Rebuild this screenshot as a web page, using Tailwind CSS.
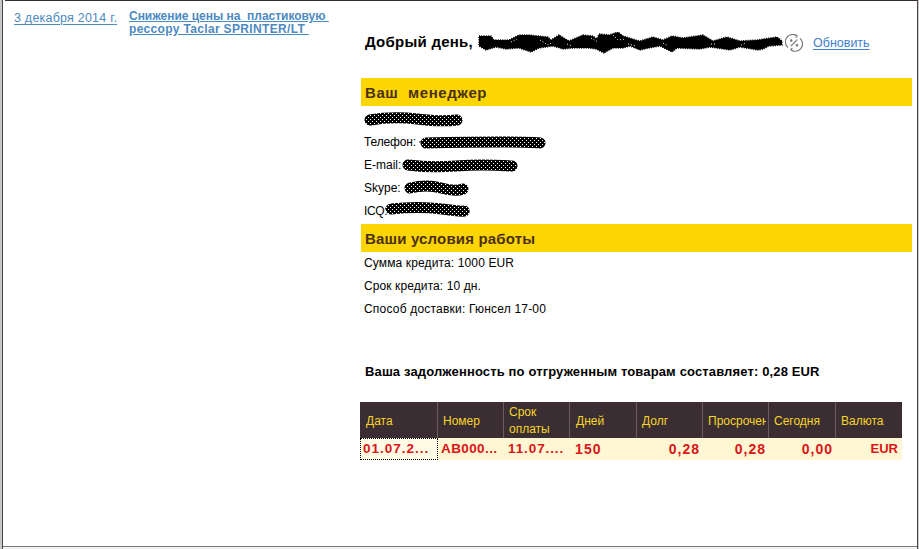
<!DOCTYPE html>
<html lang="ru"><head><meta charset="utf-8"><title>Условия работы</title>
<script src="https://cdn.jsdelivr.net/npm/@tailwindcss/browser@4"></script></head>
<body class="w-[919px] h-[549px] overflow-hidden bg-[#c9c7c7] font-['Liberation_Sans',sans-serif] text-black">
<div class="h-[549px] ml-[2px] w-[916px] border-l border-r border-[#4a4446] bg-white flex flex-col whitespace-pre">
<div class="ml-[2px] h-px bg-[#332b2d]"></div>
<div class="h-[545px] flex items-start">
<div class="w-[358px] shrink-0 pl-[11px] pt-[9px] flex text-[#4d8ac0]">
<a class="w-[115px] text-[12.5px] leading-[16px] underline underline-offset-2 tracking-[0.22px]">3 декабря 2014 г.</a>
<a class="text-[12px] leading-[13px] font-bold underline underline-offset-1"><span class="tracking-[-0.02px]">Снижение цены на  пластиковую </span>
<span class="tracking-[0.34px]">рессору Taclar SPRINTER/LT </span></a>
</div>
<main class="w-[551px] flex flex-col">
<div class="h-[77px] pt-[31px] pl-1 flex">
<h1 class="w-[112px] text-[15px] leading-[20px] font-bold tracking-[0.25px]">Добрый день,</h1>
<svg class="w-[308px] h-[24px] shrink-0" viewBox="-2 0 308 24"><path stroke="#000" stroke-width="1.5" stroke-dasharray="1 1.3" d="M0 4L12 4 15 8 30 8 40 3 50 3 69 5 72 8 80 3 90 9 104 3 114 4 118 7 120 2 130 3 139 0 144 4 157 8 161 9 174 5 184 8 193 4 204 6 224 3 234 9 248 5 261 9 278 8 298 5 303 9 303 13 290 14 284 17 279 18 261 15 251 18 231 15 221 17 198 16 193 20 181 14 170 16 161 18 151 14 144 16 134 16 125 21 117 17 110 16 94 16 84 17 74 14 60 16 52 20 40 16 27 17 17 15 7 18 0 14Z"/><path stroke="#fff" stroke-width="1" stroke-dasharray="1 2" fill="none" d="M32 10l6-3M61 8l8 5 5-3M88 12l5 2M112 6l7 4M134 3l5 5 8-1M149 12l8 2M184 11l5 3M232 12h5M262 13l5-2"/></svg>
<svg class="mt-[2px] w-[18px] h-[18px] shrink-0" viewBox="0 0 18 18" fill="none" stroke="#77787a" stroke-width="1.2"><path d="M12.5 2.2A7.2 7.2 0 0 0 3 13.6M5.5 15.5A7.2 7.2 0 0 0 15 4.4M12.5 2.2l-2-1.5M12.5 2.2l-2 1.3M5.5 15.5l2-1.3M5.5 15.5l2 1.5M5.8 12.2l6.5-6.5"/><circle cx="6.2" cy="6.5" r=".7"/><circle cx="12" cy="11.3" r=".7"/></svg>
<a class="ml-[10px] mt-[3px] text-[12.5px] leading-[16px] text-[#4080cc] underline underline-offset-2">Обновить</a>
</div>
<h2 class="h-[28px] bg-[#fbd504] pl-[4px] text-[15px] leading-[29px] font-bold text-[#4b3012] tracking-[0.6px]">Ваш  менеджер</h2>
<section class="h-[118px] pt-[2px] pl-[3px] text-[12px] leading-[23px] flex flex-col">
<svg class="w-[190px] h-[23px] shrink-0" viewBox="0 0 190 23"><defs><pattern id="ink" width="4" height="4" patternUnits="userSpaceOnUse" shape-rendering="crispEdges"><path fill="#000" d="M0 0h4v1h-4zM0 2h4v1h-4zM1 1h3v1h-3zM0 3h2v1h-2zM3 3h1v1h-1z"/></pattern></defs><path d="M6 12Q29 8 53 11T93 12" fill="none" stroke="url(#ink)" stroke-width="11" stroke-linecap="round"/></svg>
<div class="flex h-[23px]"><span class="w-[54px] tracking-[-0.15px]">Телефон: </span><svg class="w-[130px] h-[23px]" viewBox="0 0 130 23"><path d="M1 11h5" stroke="#000"/><path d="M8 12Q50 11 82 11T122 12" fill="none" stroke="url(#ink)" stroke-width="11" stroke-linecap="round"/></svg></div>
<div class="flex h-[23px]"><span class="w-[37px]">E-mail:</span><svg class="w-[120px] h-[23px]" viewBox="0 0 120 23"><path d="M7 11Q30 14 55 12T111 12" fill="none" stroke="url(#ink)" stroke-width="11" stroke-linecap="round"/></svg></div>
<div class="flex h-[23px]"><span class="w-[39px]">Skype: </span><svg class="w-[70px] h-[23px]" viewBox="0 0 70 23"><path d="M7 11Q24 7 38 11T60 12" fill="none" stroke="url(#ink)" stroke-width="11" stroke-linecap="round"/></svg></div>
<div class="flex h-[23px]"><span class="w-[20px] tracking-[-0.4px]">ICQ:</span><svg class="w-[90px] h-[23px]" viewBox="0 0 90 23"><path d="M7 9Q34 6 58 9T80 11" fill="none" stroke="url(#ink)" stroke-width="11" stroke-linecap="round"/></svg></div>
</section>
<h2 class="h-[28px] bg-[#fbd504] pl-[4px] text-[15px] leading-[30px] font-bold text-[#4b3012] tracking-[0.17px]">Ваши условия работы</h2>
<section class="h-[108px] pl-[3px] text-[12px] leading-[23px] flex flex-col">
<p class="tracking-[0.13px]">Сумма кредита: 1000 EUR</p>
<p class="tracking-[0.1px]">Срок кредита: 10 дн.</p>
<p class="tracking-[0.2px]">Способ доставки: Гюнсел 17-00</p>
</section>
<p class="h-[42px] pl-[4px] text-[13px] leading-[24px] font-bold tracking-[0.14px]">Ваша задолженность по отгруженным товарам составляет: 0,28 EUR</p>
<div class="-ml-px w-[542px] grid grid-cols-[78px_66px_66px_67px_66px_66px_67px_66px] grid-rows-[36px_22px]">
<div class="bg-[#3b2e32] border-r border-[#6a5c60] pl-[6px] text-[12px] leading-[38px] text-[#f5d52c] overflow-hidden">Дата</div>
<div class="bg-[#3b2e32] border-r border-[#6a5c60] pl-[5px] text-[12px] leading-[38px] text-[#f5d52c] overflow-hidden">Номер</div>
<div class="bg-[#3b2e32] border-r border-[#6a5c60] pl-[5px] pt-[2px] text-[12px] leading-[17px] text-[#f5d52c] overflow-hidden">Срок
оплаты</div>
<div class="bg-[#3b2e32] border-r border-[#6a5c60] pl-[6px] text-[12px] leading-[38px] text-[#f5d52c] overflow-hidden">Дней</div>
<div class="bg-[#3b2e32] border-r border-[#6a5c60] pl-[5px] text-[12px] leading-[38px] text-[#f5d52c] overflow-hidden">Долг</div>
<div class="bg-[#3b2e32] border-r border-[#6a5c60] pl-[5px] text-[12px] leading-[38px] text-[#f5d52c] overflow-hidden"><span class="block w-[58px] overflow-hidden">Просрочено</span></div>
<div class="bg-[#3b2e32] border-r border-[#6a5c60] pl-[5px] text-[12px] leading-[38px] text-[#f5d52c] overflow-hidden">Сегодня</div>
<div class="bg-[#3b2e32] pl-[5px] text-[12px] leading-[38px] text-[#f5d52c] overflow-hidden">Валюта</div>
<div class="bg-[#fffbe5] border border-dotted border-black pl-[2px] text-[13.5px] leading-[20px] font-bold text-[#d91519] tracking-[1px]">01.07.2...</div>
<div class="bg-[#fff7d3] pl-[3px] text-[13.5px] leading-[22px] font-bold text-[#d91519] tracking-[0.4px]">AB000...</div>
<div class="bg-[#fff7d3] pl-[4px] text-[13.5px] leading-[22px] font-bold text-[#d91519] tracking-[0.9px]">11.07....</div>
<div class="bg-[#fff7d3] pl-[5px] text-[14px] leading-[22px] font-bold text-[#d91519] tracking-[1.1px]">150</div>
<div class="bg-[#fff7d3] pr-[3px] text-right text-[14px] leading-[22px] font-bold text-[#d91519] tracking-[1px]">0,28</div>
<div class="bg-[#fff7d3] pr-[3px] text-right text-[14px] leading-[22px] font-bold text-[#d91519] tracking-[1px]">0,28</div>
<div class="bg-[#fff7d3] pr-[3px] text-right text-[14px] leading-[22px] font-bold text-[#d91519] tracking-[1px]">0,00</div>
<div class="bg-[#fff7d3] pr-[4px] text-right text-[13px] leading-[22px] font-bold text-[#d91519]">EUR</div>
</div>
</main>
</div>
<div class="h-px bg-[#777]"></div><div class="h-[2px] bg-[#f2f2f2]"></div>
</div>
</body></html>
